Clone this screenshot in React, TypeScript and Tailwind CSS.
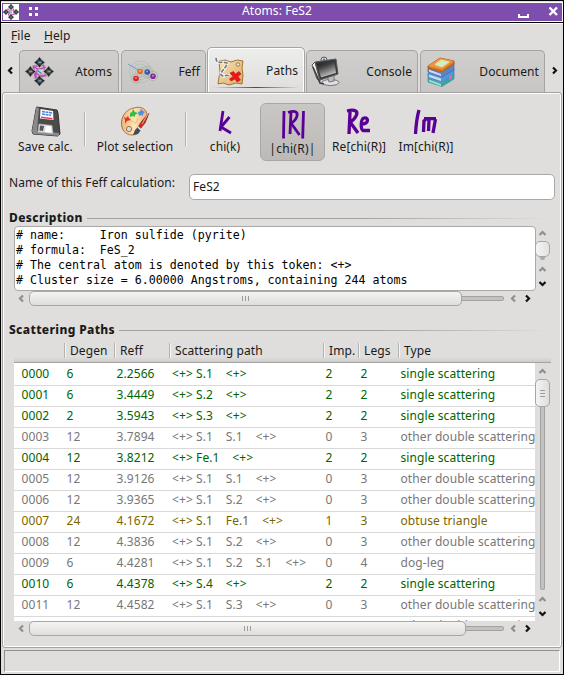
import React from "react";

const green = "text-[#006400]";
const gray = "text-[#777777]";
const olive = "text-[#7a6500]";

type Row = [string, string, string, string[], string, string, string, string];
const single = "single scattering";
const dbl = "other double scattering";
const rows: Row[] = [
  ["0000", "6", "2.2566", ["S.1"], "2", "2", single, green],
  ["0001", "6", "3.4449", ["S.2"], "2", "2", single, green],
  ["0002", "2", "3.5943", ["S.3"], "2", "2", single, green],
  ["0003", "12", "3.7894", ["S.1", "S.1"], "0", "3", dbl, gray],
  ["0004", "12", "3.8212", ["Fe.1"], "2", "2", single, green],
  ["0005", "12", "3.9126", ["S.1", "S.1"], "0", "3", dbl, gray],
  ["0006", "12", "3.9365", ["S.1", "S.2"], "0", "3", dbl, gray],
  ["0007", "24", "4.1672", ["S.1", "Fe.1"], "1", "3", "obtuse triangle", olive],
  ["0008", "12", "4.3836", ["S.1", "S.2"], "0", "3", dbl, gray],
  ["0009", "6", "4.4281", ["S.1", "S.2", "S.1"], "0", "4", "dog-leg", gray],
  ["0010", "6", "4.4378", ["S.4"], "2", "2", single, green],
  ["0011", "12", "4.4582", ["S.1", "S.3"], "0", "3", dbl, gray],
  ["0012", "12", "4.4582", ["S.1", "S.3"], "0", "3", dbl, gray],
];

const paths: Record<string, string> = {
  left: "M6 1.5 L3 4.5 L6 7.5",
  right: "M3 1.5 L6 4.5 L3 7.5",
  up: "M1.5 6 L4.5 3 L7.5 6",
  down: "M1.5 3 L4.5 6 L7.5 3",
};

function Chevron({ dir, dim }: { dir: string; dim?: boolean }) {
  return (
    <svg width="9" height="9" viewBox="0 0 9 9" className="block shrink-0">
      <path d={paths[dir]} fill="none" stroke={dim ? "#8f8f8f" : "#111"} strokeWidth="2.2" />
    </svg>
  );
}

function Diamond({ x, y }: { x: number; y: number }) {
  return (
    <g transform={`translate(${x} ${y})`}>
      <path d="M0 -5.5 L5.5 0 L0 5.5 L-5.5 0Z" fill="#a5a5a5" />
      <path d="M0 -5 L2 -2 L-2 -2Z M5 0 L2 2 L2 -2Z M0 5 L2 2 L-2 2Z M-5 0 L-2 -2 L-2 2Z" fill="#222" />
      <path d="M-2 -2H2V2H-2Z" fill="#555" stroke="#333" strokeWidth=".8" />
      <path d="M-1 0H2" stroke="#53b4c8" strokeWidth="1.2" />
    </g>
  );
}

function AtomsIcon({ size }: { size: number }) {
  return (
    <svg width={size} height={size} viewBox="0 0 28 28" className="block shrink-0">
      <path d="M8 9 L18 8 L20 18 L10 20Z M8 9 L13 12 L20 10 M10 20 L12 12 M13 18 L20 18 M9 14 L14 18" fill="none" stroke="#c050b8" strokeWidth="1.5" />
      <circle cx="14" cy="14" r="2.2" fill="#b6dfe6" />
      <path d="M12 13 L16 16" stroke="#317b91" strokeWidth="1" />
      <Diamond x={14} y={5.2} />
      <Diamond x={5.2} y={14} />
      <Diamond x={22.8} y={14} />
      <Diamond x={14} y={23} />
    </svg>
  );
}

function FeffIcon() {
  return (
    <svg width="32" height="28" viewBox="0 0 32 28" className="block shrink-0">
      <g fill="none" stroke="#a9c3b4" strokeWidth=".8">
        <circle cx="13.5" cy="14" r="11" />
        <circle cx="13.5" cy="14" r="8" />
        <circle cx="13.5" cy="14" r="5" />
      </g>
      <g fill="none" stroke="#adadad" strokeWidth=".8">
        <circle cx="20" cy="14" r="6" />
        <circle cx="20" cy="14" r="4.3" />
        <circle cx="26" cy="18" r="4.6" />
        <circle cx="9" cy="20.5" r="4.5" />
      </g>
      <path d="M1 6 L13 13" stroke="#7d8fd8" strokeWidth="1" />
      <circle cx="13" cy="13.5" r="2.8" fill="#e46b22" />
      <circle cx="20.2" cy="14" r="2.8" fill="#2b55ab" />
      <circle cx="9" cy="20.5" r="2.8" fill="#e01b25" />
      <circle cx="26" cy="18.2" r="2.8" fill="#7f2b91" />
      <g fill="#fff" opacity=".5">
        <circle cx="13" cy="13" r="1" />
        <circle cx="20" cy="13.5" r="1" />
        <circle cx="9" cy="20" r="1" />
        <circle cx="26" cy="17.7" r="1" />
      </g>
    </svg>
  );
}

function MapIcon() {
  return (
    <svg width="30" height="29" viewBox="0 0 30 29" className="block shrink-0">
      <defs>
        <linearGradient id="map" x1="0" y1="0" x2="1" y2="1">
          <stop offset="0" stopColor="#f8e5bb" />
          <stop offset="1" stopColor="#dcaa62" />
        </linearGradient>
      </defs>
      <path d="M5 4 L11 3 L17 5 L23 3 L29 4 L28 11 L29 18 L28 27 L22 26 L15 28 L9 26 L4 27 L5 20 L6 15Z" fill="url(#map)" stroke="#a47434" strokeWidth="1" />
      <path d="M14 5 L14 26 M21 5 L21 26" stroke="#e7c88c" strokeWidth="1" />
      <circle cx="24" cy="7.5" r="1.8" fill="#f4e4c3" stroke="#97805a" />
      <path d="M2 1 C2 8 9 4 13 6 C13 10 7 14 7 17 C7 21 13 17 15 19" fill="none" stroke="#fff" strokeWidth="3.2" />
      <path d="M2 1 C2 8 9 4 13 6 C13 10 7 14 7 17 C7 21 13 17 15 19" fill="none" stroke="#747a7d" strokeWidth="1.8" strokeDasharray="4 1.2" />
      <path d="M16 16 L19.5 14.5 L21.5 17 L25 14.5 L27 17 L24 19.5 L26.5 23 L23 25 L21 22 L17 24 L15.5 22 L19 19.5Z" fill="#f01418" stroke="#a90d11" strokeWidth=".5" />
    </svg>
  );
}

function MonitorIcon() {
  return (
    <svg width="30" height="31" viewBox="0 0 30 31" className="block shrink-0">
      <defs>
        <linearGradient id="screen" x1="0.2" y1="0" x2=".65" y2="1">
          <stop offset="0" stopColor="#1b1b1b" />
          <stop offset=".35" stopColor="#444" />
          <stop offset="1" stopColor="#d5d5d5" />
        </linearGradient>
      </defs>
      <ellipse cx="19.5" cy="26.5" rx="8.5" ry="3" fill="#dfdfe2" stroke="#747478" />
      <path d="M16 20 L23 18 L23 25 L18 26Z" fill="#bbb" stroke="#555" strokeWidth=".7" />
      <circle cx="13" cy="4" r="3" fill="#ddd" stroke="#555" />
      <path d="M1 9 L4 6 L9 25 L6 23Z" fill="#eee" stroke="#555" />
      <path d="M4 6 L25 3 L27 18 L9 24Z" fill="#373737" stroke="#5b5b5b" />
      <path d="M6 8 L23.5 5 L25 17 L10 21.5Z" fill="url(#screen)" />
      <path d="M2 11 L9 27 L13 28" fill="none" stroke="#3f3f3f" strokeWidth="1.5" />
      <circle cx="13" cy="3.5" r="1" fill="#3b6ea6" />
    </svg>
  );
}

function BooksIcon() {
  return (
    <svg width="28" height="30" viewBox="0 0 28 30" className="block shrink-0">
      <path d="M1 21 L15 26 L27 18 V22 L15 29.5 L1 25Z" fill="#2fa8a0" stroke="#4c9aa0" strokeWidth=".8" />
      <path d="M2 22.5 L14 27 V29 L2 24.5Z" fill="#a5dcd3" />
      <path d="M1 16 L15 20.5 L27 12 V18 L15 25 L1 20.5Z" fill="#4b9bdd" stroke="#4c79b5" strokeWidth=".8" />
      <path d="M2 17.5 L14 21.5 V24 L2 20Z" fill="#c8dcf6" />
      <path d="M1 11 L15 16 L27 6 V13 L15 20 L1 15Z" fill="#5585cc" stroke="#58709f" strokeWidth=".8" />
      <path d="M2 12.5 L14 17 V19 L2 14.8Z" fill="#d5d8f2" />
      <path d="M1 9 L13 1 L27 4 V7 L15 15 L1 11Z" fill="#d8761e" stroke="#a95216" strokeWidth=".9" />
      <path d="M1 9 L13 1 L27 4 L15 12.5Z" fill="#ee9740" />
      <path d="M8 7.5 L14 3 L22 5 L15 10Z" fill="#c6f1cb" stroke="#f0dd9b" />
      <path d="M22 20 L25 18 V21 L22 23Z" fill="#e46ba8" />
    </svg>
  );
}

function FloppyIcon() {
  return (
    <svg width="30" height="31" viewBox="0 0 30 31" className="block">
      <path d="M5.5 1 L26 4 L27 7 L29 28 L27 30 L2 28 L1 25Z" fill="#4b4b4b" stroke="#333" />
      <path d="M1 25 L5.5 1 L8 2 L6 25 L28 27 V30 L2 28Z" fill="#8a8a8a" />
      <path d="M9.5 3 L22 5 L22.5 14 L9 12.5Z" fill="#fafafe" />
      <path d="M11 5.5 L21 7 M11 8 L20 9.3" stroke="#4e83dd" strokeWidth="1.5" strokeDasharray="3 .6" />
      <path d="M10 10.5 L21.5 12 V13.5 L10 12Z" fill="#df4057" />
      <path d="M8 18 L21 19.5 L22 27.5 L7 26Z" fill="#dcdcdc" stroke="#bbb" strokeWidth=".6" />
      <path d="M9 19.5 L13 20 L12 25 L8.5 24.5Z" fill="#555" />
      <path d="M15 20 L20 20.500 L20.500 26.500 L14 26Z" fill="#fff" />
    </svg>
  );
}

function PaletteIcon() {
  return (
    <svg width="31" height="31" viewBox="0 0 31 31" className="block">
      <defs>
        <linearGradient id="wood">
          <stop offset="0" stopColor="#edb678" />
          <stop offset=".5" stopColor="#ffe4b5" />
          <stop offset="1" stopColor="#efb475" />
        </linearGradient>
      </defs>
      <path d="M14 2 C22 -.5 28 4 27 11 C26 17 19 15 19 20 C20 24 19 29 12 29 C5 29 1 23 1.5 16 C2 9 7 3 14 2Z" fill="url(#wood)" stroke="#a57543" />
      <path d="M9 17 C13 10 15 24 18 12" fill="none" stroke="#e9b77b" />
      <circle cx="9" cy="23" r="2.6" fill="#dedddb" stroke="#987148" />
      <path d="M4 11 L6 12 L8 10 L9 12 L11 14 L7 15 L5 18 L5 14Z" fill="#e83431" />
      <path d="M10 7 L12 6 L13 3 L15 6 L18 7 L15 9 L15 11 L13 10 L10 11Z" fill="#36bd43" />
      <path d="M18 6 L20 5.5 L21 3 L23 5 L25 6 L23 8 L23 10 L21 9 L19 10Z" fill="#528ee5" />
      <path d="M29 7 L25 17 L20 23 L18 22 L22 15Z" fill="#d72a26" stroke="#7b2a24" strokeWidth=".8" />
      <path d="M28.5 7 L22 18" stroke="#f2a09a" />
      <path d="M18 21 L21 24 L18 28 L13 29 L15 24Z" fill="#404b5c" />
      <path d="M18 21 L21 24" stroke="#eee" strokeWidth="1.5" />
    </svg>
  );
}

const glyphs: Record<string, string[]> = {
  k: ["M13 5 L10 25", "M19.5 11 L11 21 L21 27"],
  R: ["M6 3 L5.5 30.5", "M13 4 L12 26", "M10 4.5 C17 2 20 4 19 8 C18 12 15 14 13 15 L21.5 27", "M25.5 3 L24.7 30.5"],
  Re: ["M6 6 L5 28", "M3 5 C11 3 14 5 12.5 9 C11 13 8 15 6 16 L14 27", "M17.5 18 C25 18 25 11 20 12 C16.5 13 16.5 23 19 24.5 L26 24.5"],
  Im: ["M8 4 C6 11 5 19 4.5 28", "M13 14 L12.5 26", "M13 15 C15 12 18 12 18 14 L17.5 25", "M13 12.7 L25 12.7 M24.5 13 L22 27"],
};

function Handwriting({ kind }: { kind: string }) {
  return (
    <svg width="30" height="31" viewBox="0 0 30 31" className="block">
      {glyphs[kind].map((d) => (
        <path key={d} d={d} fill="none" stroke="#5a0096" strokeWidth={kind === "k" || kind === "R" ? 2.8 : 3.3} strokeLinejoin="bevel" />
      ))}
    </svg>
  );
}

function Tab({ icon, label, box, pad }: { icon: React.ReactNode; label: string; box: string; pad: string }) {
  return (
    <div className={`flex h-[42px] items-center justify-between rounded-t-[5px] border border-b-0 border-[#a5a4a2] bg-linear-to-b from-[#d0cfcd] to-[#c7c6c4] ${pad} ${box}`}>
      {icon}
      <span>{label}</span>
    </div>
  );
}

function Sep({ className }: { className: string }) {
  return <div className={`w-[2px] shrink-0 border-r border-[#f4f4f3] bg-[#b4b3b1] ${className}`} />;
}

function Tool({ icon, label, box }: { icon: React.ReactNode; label: string; box: string }) {
  return (
    <div className={`flex h-[57px] shrink-0 flex-col items-center pt-[3px] ${box}`}>
      {icon}
      <span className="mt-[2px] leading-[16px]">{label}</span>
    </div>
  );
}

function Heading({ text, width }: { text: string; width: string }) {
  return (
    <div className="flex h-[16px] items-center pr-[11px] pl-[6px]">
      <span className={`shrink-0 text-[12px] font-extrabold tracking-[0.35px] ${width}`}>{text}</span>
      <div className="mt-[1px] h-px grow bg-linear-to-r from-[#a3a2a0] from-60% to-[#dfdedc]" />
    </div>
  );
}

function HScroll({ thumb, trough }: { thumb: string; trough: string }) {
  return (
    <div className="flex h-[15px] items-center pl-[13px]">
      <div className="ml-px"><Chevron dir="left" dim /></div>
      <div className={`ml-[3px] flex h-[15px] items-center justify-center gap-[2px] rounded-[5px] border border-[#a7a6a4] bg-linear-to-b from-[#f4f4f3] to-[#dfdedc] ${thumb}`}>
        <i className="h-[5px] w-px bg-[#9c9c9c]" />
        <i className="h-[5px] w-px bg-[#9c9c9c]" />
        <i className="h-[5px] w-px bg-[#9c9c9c]" />
      </div>
      <div className={`h-[5px] rounded-r-[3px] border border-l-0 border-[#a3a2a0] bg-[#c3c2c0] ${trough}`} />
      <div className="ml-[5px] flex gap-[5px]">
        <Chevron dir="left" dim />
        <Chevron dir="right" />
      </div>
    </div>
  );
}

const cols = "grid grid-cols-[45px_50px_55.5px_153.5px_35px_40px_1fr]";

export default function App() {
  return (
    <div className="flex h-[675px] w-[564px] flex-col overflow-hidden border border-black bg-[#dfdedc] font-['Noto_Sans','Open_Sans',sans-serif] text-[12px] leading-[16px] tracking-[0.09px] whitespace-nowrap text-[#1a1a1a]">
      <header className="flex h-[22px] shrink-0 items-center border-b border-black">
        <div className="flex h-[20px] w-full items-center border border-white bg-[#7d4eae]">
          <div className="ml-px h-[16px] w-[16px] bg-white">
            <AtomsIcon size={16} />
          </div>
          <div className="ml-[10px] grid grid-cols-2 gap-x-[3px] gap-y-[3px]">
            <i className="h-[3px] w-[3px] bg-white" />
            <i className="h-[3px] w-[3px] bg-white" />
            <i className="h-[3px] w-[3px] bg-white" />
            <i className="h-[3px] w-[3px] bg-white" />
          </div>
          <span className="-mt-px ml-[204px] w-[71px] text-white">Atoms: FeS2</span>
          <div className="mt-[8px] ml-auto h-[4px] w-[11px] border-2 border-t-0 border-white" />
          <svg width="11" height="11" viewBox="0 0 11 11" className="mr-[3px] ml-[19px]">
            <path d="M1.5 1.5 L9 9 M9 1.5 L1.5 9" stroke="white" strokeWidth="2.4" />
          </svg>
        </div>
      </header>

      <nav className="flex h-[25px] shrink-0 items-center gap-[15px] border-t border-white pl-[10px]">
        <span className="w-[18px]"><u className="underline-offset-2">F</u>ile</span>
        <span><u className="underline-offset-2">H</u>elp</span>
      </nav>

      <div className="flex h-[44px] shrink-0 items-end pl-[5px]">
        <div className="mr-[4px] mb-[17px]"><Chevron dir="left" /></div>
        <Tab icon={<AtomsIcon size={29} />} label="Atoms" box="w-[100px]" pad="pl-[5px] pr-[6px]" />
        <Tab icon={<FeffIcon />} label="Feff" box="ml-[2px] w-[85px]" pad="pl-[5px] pr-[5px]" />
        <div className="z-10 ml-px flex h-[45px] w-[98px] flex-col rounded-t-[5px] border border-b-0 border-[#a5a4a2] bg-linear-to-b from-[#ededec] to-[#dfdedc] shadow-[inset_1px_1px_0_#fff,inset_-1px_0_0_#fff]">
          <div className="flex h-[39px] items-center justify-between pt-[7px] pr-[6px] pl-[6px]">
            <MapIcon />
            <span>Paths</span>
          </div>
          <div className="mx-[5px] h-px shrink-0 bg-linear-to-r from-[#dfdedc] via-[#6b16c4] to-[#dfdedc]" />
        </div>
        <Tab icon={<MonitorIcon />} label="Console" box="ml-px w-[112px]" pad="pl-[4px] pr-[5px]" />
        <Tab icon={<BooksIcon />} label="Document" box="ml-[2px] w-[125px]" pad="pl-[6px] pr-[5px]" />
        <div className="mb-[17px] ml-[5px]"><Chevron dir="right" /></div>
      </div>

      <main className="mx-px flex h-[556px] shrink-0 flex-col rounded-[3px] border border-[#a3a2a0] shadow-[inset_1px_1px_0_#fff,inset_-1px_-1px_0_#fff]">
        <div className="flex h-[80px] items-start pt-[10px] pl-px">
          <Tool icon={<FloppyIcon />} label="Save calc." box="ml-[11px] w-[61px]" />
          <Sep className="mt-[9px] ml-[8px] h-[34px]" />
          <Tool icon={<PaletteIcon />} label="Plot selection" box="ml-[9px] w-[80px]" />
          <Sep className="mt-[9px] ml-[10px] h-[34px]" />
          <Tool icon={<Handwriting kind="k" />} label="chi(k)" box="ml-[17px] w-[42px]" />
          <div className="ml-[14px] flex h-[58px] w-[65px] flex-col items-center rounded-[6px] border border-[#a9a7a5] bg-linear-to-b from-[#c9c7c5] to-[#bdb9b6] pt-[4px]">
            <Handwriting kind="R" />
            <span className="mt-[2px] leading-[16px] tracking-[0.3px]">|chi(R)|</span>
          </div>
          <Tool icon={<Handwriting kind="Re" />} label="Re[chi(R)]" box="ml-[5px] w-[58px]" />
          <Tool icon={<Handwriting kind="Im" />} label="Im[chi(R)]" box="ml-[8px] w-[60px]" />
        </div>

        <div className="flex h-[37px] items-start pl-[6px]">
          <span className="mt-[2px] w-[180px]">Name of this Feff calculation:</span>
          <div className="mt-[1px] h-[26px] w-[366px] rounded-[5px] border border-[#aaa9a7] bg-white pl-[3px] leading-[23px]">FeS2</div>
        </div>

        <section className="flex flex-col">
          <Heading text="Description" width="w-[78px]" />
          <div className="flex">
            <pre className="ml-[11px] h-[65px] w-[522px] overflow-hidden rounded-[4px] border border-[#aaa9a7] bg-white pt-px pl-px font-['DejaVu_Sans_Mono',monospace] text-[11.627px] leading-[15px] tracking-normal text-black">
              {"# name:     Iron sulfide (pyrite)\n# formula:  FeS_2\n# The central atom is denoted by this token: <+>\n# Cluster size = 6.00000 Angstroms, containing 244 atoms"}
            </pre>
            <div className="-ml-px flex w-[15px] flex-col items-center pt-[3px]">
              <Chevron dir="up" dim />
              <div className="mt-[3px] h-[16px] w-[15px] rounded-[5px] border border-[#a7a6a4] bg-linear-to-r from-[#f4f4f3] to-[#e3e2e0]" />
              <div className="h-[3px] w-[5px] rounded-b-[3px] bg-[#aaa]" />
              <div className="mt-[5px]"><Chevron dir="up" dim /></div>
              <div className="mt-[5px]"><Chevron dir="down" /></div>
            </div>
          </div>
          <HScroll thumb="w-[433px]" trough="w-[42px]" />
        </section>

        <section className="mt-[16px] flex flex-col">
          <Heading text="Scattering Paths" width="w-[110px]" />
          <div className="mr-[10px] ml-[11px] flex h-[25px] items-start border-b border-[#a3a2a0] bg-linear-to-b from-[#dfdedc] from-80% to-[#cdccca] pt-[5px]">
            <Sep className="ml-[50px] h-[15px]" /><span className="ml-[4px] w-[44px]">Degen</span>
            <Sep className="h-[15px]" /><span className="ml-[4px] w-[49px]">Reff</span>
            <Sep className="h-[15px]" /><span className="ml-[4px] w-[148px]">Scattering path</span>
            <Sep className="h-[15px]" /><span className="ml-[4px] w-[29px]">Imp.</span>
            <Sep className="h-[15px]" /><span className="ml-[4px] w-[34px]">Legs</span>
            <Sep className="h-[15px]" /><span className="ml-[4px]">Type</span>
          </div>
          <div className="flex h-[258px]">
            <div className="ml-[11px] w-[521px] overflow-hidden bg-white pt-[2px]">
              {rows.map(([id, degen, reff, atoms, imp, legs, type, color]) => (
                <div key={id} className={`h-[21px] border-b border-[#d9d9d9] pl-[7.5px] leading-[17px] ${cols} ${color}`}>
                  <span>{id}</span>
                  <span>{degen}</span>
                  <span>{reff}</span>
                  <span className="whitespace-pre">{`<+> ${atoms.join("    ")}    <+>`}</span>
                  <span>{imp}</span>
                  <span>{legs}</span>
                  <span>{type}</span>
                </div>
              ))}
            </div>
            <div className="flex w-[15px] flex-col items-center pt-[4px]">
              <Chevron dir="up" dim />
              <div className="mt-[3px] flex h-[28px] w-[15px] flex-col items-center justify-center gap-[2px] rounded-[5px] border border-[#a7a6a4] bg-linear-to-r from-[#f4f4f3] to-[#dfdedc]">
                <i className="h-px w-[5px] bg-[#9c9c9c]" />
                <i className="h-px w-[5px] bg-[#9c9c9c]" />
                <i className="h-px w-[5px] bg-[#9c9c9c]" />
              </div>
              <div className="h-[183px] w-[5px] rounded-b-[3px] border border-t-0 border-[#a3a2a0] bg-[#c3c2c0]" />
              <div className="mt-[5px]"><Chevron dir="up" dim /></div>
              <div className="mt-[5px]"><Chevron dir="down" /></div>
            </div>
          </div>
          <HScroll thumb="w-[437px]" trough="w-[38px]" />
        </section>
      </main>

      <footer className="mx-[3px] mt-[2px] mb-[2px] grow border border-r-white border-b-white border-t-[#92908e] border-l-[#92908e]" />
    </div>
  );
}
